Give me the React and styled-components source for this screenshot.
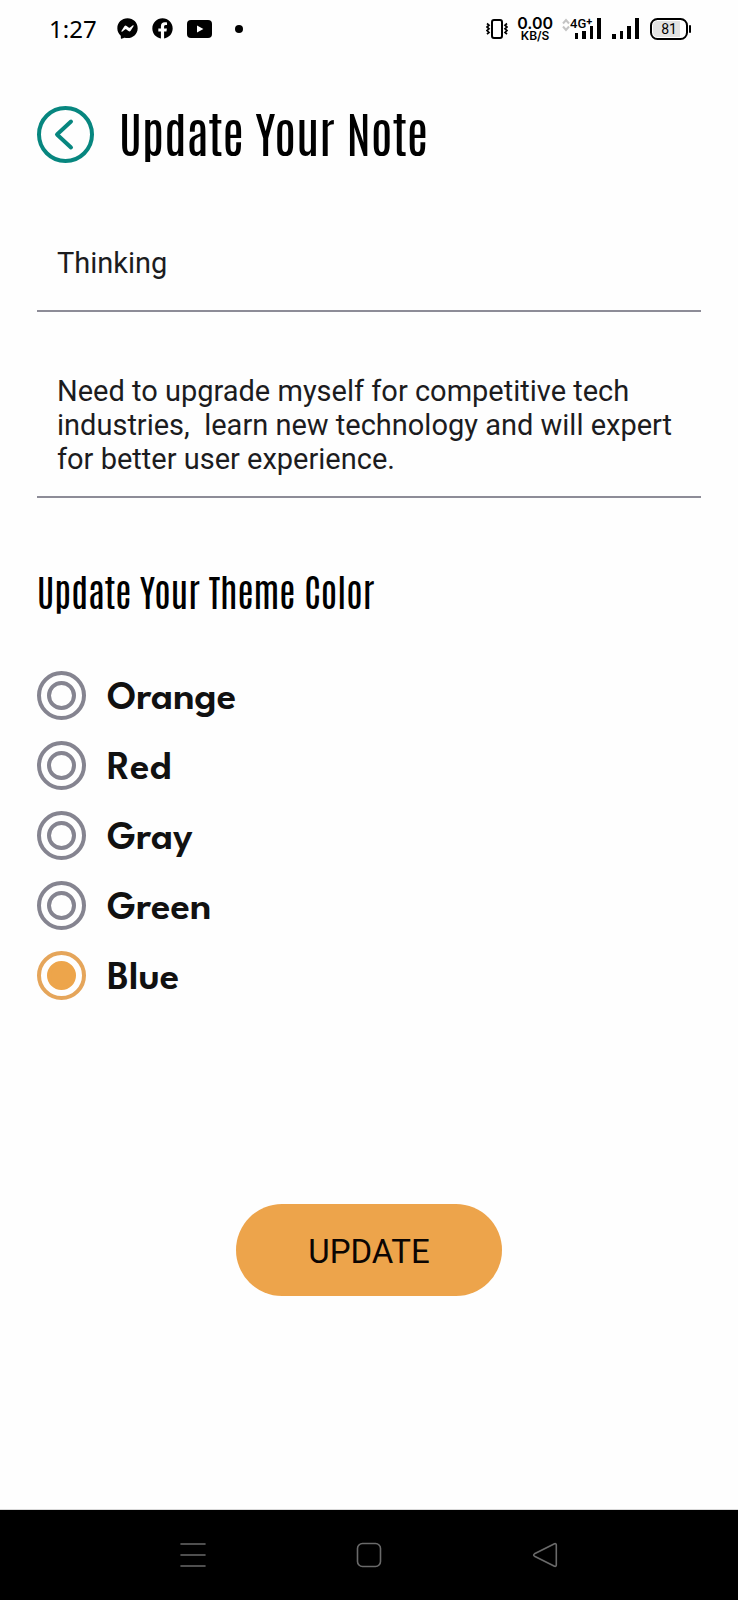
import React, { useState } from "react";
import styled, { createGlobalStyle, css } from "styled-components";
import { FaFacebook, FaFacebookMessenger } from "react-icons/fa";

const GlobalStyle = createGlobalStyle`
  *, *::before, *::after { box-sizing: border-box; }
  body {
    margin: 0;
    background: #fefefe;
    color: #000;
    font-family: Roboto, "Liberation Sans", sans-serif;
  }
`;

const Screen = styled.div`
  display: flex;
  flex-direction: column;
  min-height: 100vh;
`;

const StatusBar = styled.header`
  display: flex;
  align-items: center;
  justify-content: space-between;
  height: 57px;
  padding: 0 47px 0 49px;
`;

const StatusGroup = styled.div`
  display: flex;
  align-items: center;
  gap: ${({ $gap }) => $gap}px;
`;

const Clock = styled.time`
  margin-right: 6px;
  font: 400 24px/32px "Noto Sans", sans-serif;
`;

const Dot = styled.span`
  width: 8px;
  height: 8px;
  margin-left: 9px;
  border-radius: 50%;
  background: #000;
`;

const Speed = styled.div`
  display: flex;
  flex-direction: column;
  align-items: center;
  font-family: Inter, sans-serif;
  font-weight: 600;
`;

const SpeedValue = styled.span`
  font-size: 16px;
  line-height: 14px;
`;

const SpeedUnit = styled.span`
  font-size: 12px;
  line-height: 12px;
`;

const Content = styled.main`
  flex: 1;
  display: flex;
  flex-direction: column;
  padding: 49px 37px 0;
`;

const TitleRow = styled.div`
  display: flex;
  align-items: center;
  gap: 25px;
`;

const BackButton = styled.button`
  display: grid;
  place-items: center;
  width: 57px;
  height: 57px;
  padding: 0;
  border: 4px solid #07867f;
  border-radius: 50%;
  background: none;
  color: #07867f;
`;

const displayFont = css`
  margin: 0;
  font-family: Antonio, "Roboto Condensed", "Liberation Sans Narrow", "Liberation Sans", sans-serif;
  font-weight: 500;
`;

const Title = styled.h1`
  ${displayFont}
  padding-bottom: 8px;
  font-size: 49px;
  line-height: 48px;
`;

const Form = styled.form`
  display: flex;
  flex-direction: column;
`;

const fieldStyle = css`
  display: block;
  width: 100%;
  border: 0;
  border-bottom: 2px solid #8d8c97;
  border-radius: 0;
  outline: 0;
  background: none;
  color: #1c1c1e;
  font: 400 29px/34px Roboto, sans-serif;
`;

const NoteTitle = styled.input`
  ${fieldStyle}
  height: 96px;
  margin-top: 53px;
  padding: 0 20px;
`;

const NoteBody = styled.textarea`
  ${fieldStyle}
  height: 132px;
  margin-top: 54px;
  padding: 8px 20px 0;
  overflow: hidden;
  resize: none;
`;

const ThemePicker = styled.fieldset`
  min-width: 0;
  margin: 64px 0 0;
  padding: 0;
  border: 0;
`;

const ThemeTitle = styled.legend`
  ${displayFont}
  padding: 0;
  font-size: 37px;
  line-height: 56px;
`;

const Options = styled.div`
  display: flex;
  flex-direction: column;
  align-items: flex-start;
  gap: 21px;
  padding-top: 53px;
`;

const Option = styled.label`
  display: flex;
  align-items: center;
  gap: 21px;
  height: 49px;
  color: #111;
  font: 600 40px/49px "League Spartan", Spartan, Jost, Lato, sans-serif;
`;

const OptionText = styled.span`
  padding-top: 8px;
`;

const Radio = styled.input`
  appearance: none;
  display: grid;
  place-items: center;
  width: 49px;
  height: 49px;
  margin: 0;
  border: 4px solid #858490;
  border-radius: 50%;

  &::before {
    content: "";
    width: 29px;
    height: 29px;
    border: 4px solid #858490;
    border-radius: 50%;
  }

  &:checked { border-color: #e5a55a; }
  &:checked::before { border-color: #eda54b; background: #eda54b; }
`;

const UpdateButton = styled.button`
  align-self: center;
  min-width: 266px;
  height: 92px;
  margin: 204px 0 48px;
  padding: 3px 32px 0;
  border: 0;
  border-radius: 46px;
  background: #eda44b;
  color: #0b0503;
  font: 400 33px/40px Roboto, sans-serif;
`;

const NavBar = styled.nav`
  display: flex;
  justify-content: center;
  border-top: 1px solid #d8d8d8;
  background: #000;
`;

const NavItems = styled.div`
  display: grid;
  grid-template-columns: repeat(3, 1fr);
  width: 100%;
  max-width: 528px;
`;

const NavButton = styled.button`
  display: grid;
  place-items: center;
  height: 90px;
  padding: 0;
  border: 0;
  background: none;
  color: #6a6a6a;
`;

const YouTubeIcon = () => (
  <svg width="25" height="18" viewBox="0 0 25 18" aria-hidden="true">
    <rect width="25" height="18" rx="4" />
    <path d="M10 5.4v7.2l6.4-3.6z" fill="#fff" />
  </svg>
);

const VibrateIcon = () => (
  <svg width="22" height="20" viewBox="0 0 22 20" fill="none" stroke="#000" aria-hidden="true">
    <rect x="6" y="1.1" width="10" height="17.8" rx="2" strokeWidth="2" />
    <path
      d="M1 4.500l2 1.700-2 1.800 2 1.800-2 1.800 2 1.800-2 1.800M21 4.500l-2 1.700 2 1.800-2 1.800 2 1.800-2 1.800 2 1.800"
      strokeWidth="1.7"
    />
  </svg>
);

const MobileDataIcon = () => (
  <svg width="39" height="23" viewBox="0 0 39 23" overflow="visible" aria-label="4G+ signal">
    <path d="M1 6.500l3-3.500L7 6.500M1 9.500l3 3.500L7 9.500" fill="none" stroke="#c4c4c4" strokeWidth="2" />
    <path d="M13 16h3v6h-3zM20 14h4v8h-4zM28 9h3v13h-3zM35 1h4v21h-4z" />
    <text x="8" y="11" fontFamily="Roboto, sans-serif" fontSize="13" fontWeight="500">
      4G<tspan dy="-3" fontSize="11" fontWeight="700">+</tspan>
    </text>
  </svg>
);

const SignalIcon = () => (
  <svg width="27" height="23" viewBox="0 0 27 23" aria-label="Signal">
    <path d="M0 17h4v5H0zM8 14h3v8H8zM15 9h4v13h-4zM23 1h4v21h-4z" />
  </svg>
);

const BatteryIcon = () => (
  <svg width="41" height="22" viewBox="0 0 41 22" aria-label="Battery">
    <rect x="1" y="1" width="36" height="20" rx="6.5" fill="#fff" stroke="#000" strokeWidth="2" />
    <path d="M7.500 3H30v16H7.500A4.500 4.500 0 0 1 3 14.500v-7A4.500 4.500 0 0 1 7.500 3z" fill="#e2e2e2" />
    <rect x="39" y="7" width="2" height="8" rx="1" />
    <text x="19" y="16" textAnchor="middle" fontFamily="Roboto, sans-serif" fontSize="14">81</text>
  </svg>
);

const ChevronIcon = () => (
  <svg width="49" height="49" viewBox="0 0 49 49" fill="none" aria-hidden="true">
    <path d="M30 11.500L16 24.500L30 37.500" stroke="currentColor" strokeWidth="4" strokeLinecap="round" strokeLinejoin="round" />
  </svg>
);

const NavIcon = ({ children }) => (
  <svg width="26" height="26" viewBox="0 0 26 26" fill="none" stroke="currentColor" strokeWidth="1.6" strokeLinecap="round" strokeLinejoin="round" aria-hidden="true">
    {children}
  </svg>
);

const COLORS = ["Orange", "Red", "Gray", "Green", "Blue"];

export default function App() {
  const [title, setTitle] = useState("Thinking");
  const [body, setBody] = useState(
    "Need to upgrade myself for competitive tech industries,  learn new technology and will expert for better user experience."
  );
  const [color, setColor] = useState("Blue");

  return (
    <Screen>
      <GlobalStyle />
      <StatusBar>
        <StatusGroup $gap={14}>
          <Clock>1:27</Clock>
          <FaFacebookMessenger size={21} />
          <FaFacebook size={21} />
          <YouTubeIcon />
          <Dot />
        </StatusGroup>
        <StatusGroup $gap={11}>
          <StatusGroup $gap={9}>
            <VibrateIcon />
            <Speed>
              <SpeedValue>0.00</SpeedValue>
              <SpeedUnit>KB/S</SpeedUnit>
            </Speed>
            <MobileDataIcon />
          </StatusGroup>
          <SignalIcon />
          <BatteryIcon />
        </StatusGroup>
      </StatusBar>

      <Content>
        <TitleRow>
          <BackButton type="button" aria-label="Back">
            <ChevronIcon />
          </BackButton>
          <Title>Update Your Note</Title>
        </TitleRow>

        <Form onSubmit={(e) => e.preventDefault()}>
          <NoteTitle aria-label="Note title" value={title} onChange={(e) => setTitle(e.target.value)} />
          <NoteBody aria-label="Note" spellCheck={false} value={body} onChange={(e) => setBody(e.target.value)} />

          <ThemePicker>
            <ThemeTitle>Update Your Theme Color</ThemeTitle>
            <Options>
              {COLORS.map((name) => (
                <Option key={name}>
                  <Radio type="radio" name="theme" value={name} checked={color === name} onChange={() => setColor(name)} />
                  <OptionText>{name}</OptionText>
                </Option>
              ))}
            </Options>
          </ThemePicker>

          <UpdateButton type="submit">UPDATE</UpdateButton>
        </Form>
      </Content>

      <NavBar aria-label="System">
        <NavItems>
          <NavButton type="button" aria-label="Recent apps">
            <NavIcon>
              <path d="M1 2h24M1 13h24M1 24h24" />
            </NavIcon>
          </NavButton>
          <NavButton type="button" aria-label="Home">
            <NavIcon>
              <rect x="1.500" y="1.500" width="23" height="23" rx="5" />
            </NavIcon>
          </NavButton>
          <NavButton type="button" aria-label="Back to previous app">
            <NavIcon>
              <path d="M22.500 1.700L2.500 11.800Q0.800 13 2.500 14.200L22.500 24.300Q24.300 24.800 24.300 23V3Q24.300 1.200 22.500 1.700z" />
            </NavIcon>
          </NavButton>
        </NavItems>
      </NavBar>
    </Screen>
  );
}
